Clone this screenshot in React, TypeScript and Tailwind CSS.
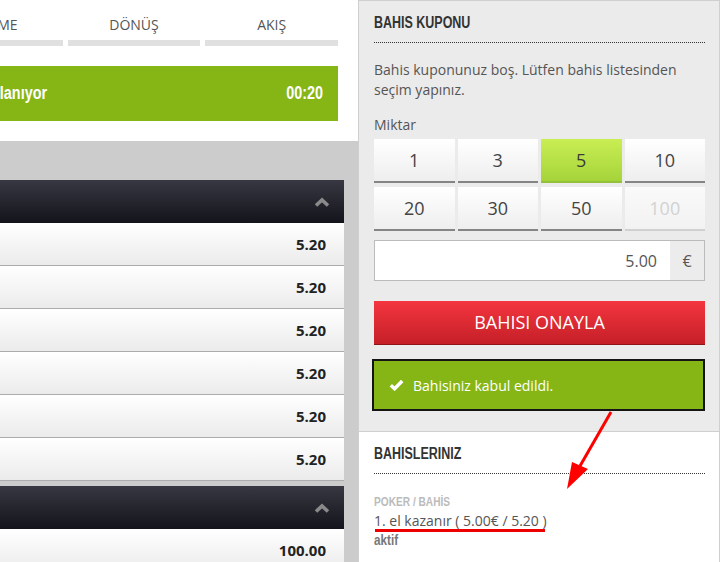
import React from "react";

function Cond({ children, right = false }: { children: React.ReactNode; right?: boolean }) {
  return (
    <span
      className={
        right
          ? "inline-block whitespace-nowrap font-['Liberation_Sans',Arial,sans-serif] font-bold scale-x-[0.8] origin-right"
          : "inline-block whitespace-nowrap font-['Liberation_Sans',Arial,sans-serif] font-bold scale-x-[0.78] origin-left"
      }
    >
      {children}
    </span>
  );
}

function Chevron() {
  return (
    <svg width="16" height="10" viewBox="0 0 16 10" className="block">
      <polyline points="2,8.5 8,3 14,8.5" fill="none" stroke="#8a8a8a" strokeWidth="3.6" strokeLinejoin="miter" />
    </svg>
  );
}

function DarkHeader() {
  return (
    <div className="h-[43px] flex items-center justify-end pr-[14px] bg-linear-to-b from-[#383842] to-[#14141c]">
      <Chevron />
    </div>
  );
}

function Row({ value }: { value: string }) {
  return (
    <div className="h-[43px] flex items-center justify-end pr-[18px] bg-linear-to-b from-[#ffffff] to-[#ebebeb] border-b border-[#acacac]">
      <span className="text-[15px] font-bold text-[#222]">{value}</span>
    </div>
  );
}

function AmountBtn({ label, kind }: { label: string; kind: "normal" | "active" | "disabled" }) {
  if (kind === "active") {
    return (
      <div className="h-[44px] flex items-center justify-center text-[18px] text-[#3a3a3a] bg-linear-to-b from-[#c9ee53] to-[#a5d43a] border-b-2 border-[#93c23a]">
        {label}
      </div>
    );
  }
  if (kind === "disabled") {
    return (
      <div className="h-[44px] flex items-center justify-center text-[18px] text-[#d2d2d2] bg-linear-to-b from-[#fafafa] to-[#f2f2f2] border-b-2 border-[#d0d0d0]">
        {label}
      </div>
    );
  }
  return (
    <div className="h-[44px] flex items-center justify-center text-[18px] text-[#444] bg-linear-to-b from-[#ffffff] to-[#eeeeee] border-b-2 border-[#858585]">
      {label}
    </div>
  );
}

export default function App() {
  return (
    <div className="relative flex w-[720px] h-[562px] overflow-hidden font-['Open_Sans',sans-serif] bg-white">
      {/* Left column */}
      <div className="w-[358px] shrink-0 flex flex-col overflow-hidden">
        <div className="bg-white pr-[20px] pb-[20px]">
          <div className="-ml-[70px]">
            <div className="grid grid-cols-3 gap-x-[5px]">
              <div className="flex flex-col">
                <div className="h-[20px] mt-[15px] leading-[20px] text-[14px] text-[#555] flex justify-end pr-[45px] whitespace-nowrap">BEKLEME</div>
                <div className="h-[6px] mt-[5px] bg-[#e0e0e0]" />
              </div>
              <div className="flex flex-col">
                <div className="h-[20px] mt-[15px] leading-[20px] text-[14px] text-[#555] text-center">DÖNÜŞ</div>
                <div className="h-[6px] mt-[5px] bg-[#e0e0e0]" />
              </div>
              <div className="flex flex-col">
                <div className="h-[20px] mt-[15px] leading-[20px] text-[14px] text-[#555] text-center">AKIŞ</div>
                <div className="h-[6px] mt-[5px] bg-[#e0e0e0]" />
              </div>
            </div>
            <div className="mt-[20px] h-[55px] bg-[#86b516] flex items-center justify-between pr-[15px] text-white text-[18px]">
              <div className="w-[117px] flex justify-end">
                <Cond right>Bahisler toplanıyor</Cond>
              </div>
              <Cond right>00:20</Cond>
            </div>
          </div>
        </div>
        <div className="flex-1 bg-[#cccccc] pt-[39px] pr-[14px]">
          <div className="-ml-[70px]">
            <DarkHeader />
            <Row value="5.20" />
            <Row value="5.20" />
            <Row value="5.20" />
            <Row value="5.20" />
            <Row value="5.20" />
            <Row value="5.20" />
            <div className="h-[5px]" />
            <DarkHeader />
            <Row value="100.00" />
          </div>
        </div>
      </div>

      {/* Right column */}
      <div className="w-[362px] shrink-0 flex flex-col border-l border-r border-t border-[#cfcfcf]">
        <div className="bg-[#ebebeb] pt-[11px] pl-[15px] pr-[14px] pb-[20px] border-b border-[#cfcfcf]">
          <h2 className="h-[20px] leading-[20px] text-[16px] text-[#333] box-content pb-[10px] border-b border-dotted border-[#333]">
            <Cond>BAHIS KUPONU</Cond>
          </h2>
          <p className="mt-[17px] text-[14px] leading-[20px] text-[#555]">
            Bahis kuponunuz boş. Lütfen bahis listesinden seçim yapınız.
          </p>
          <div className="mt-[15px] text-[14px] leading-[20px] text-[#555]">Miktar</div>
          <div className="mt-[4px] grid grid-cols-4 gap-x-[3px] gap-y-[4px]">
            <AmountBtn label="1" kind="normal" />
            <AmountBtn label="3" kind="normal" />
            <AmountBtn label="5" kind="active" />
            <AmountBtn label="10" kind="normal" />
            <AmountBtn label="20" kind="normal" />
            <AmountBtn label="30" kind="normal" />
            <AmountBtn label="50" kind="normal" />
            <AmountBtn label="100" kind="disabled" />
          </div>
          <div className="mt-[9px] h-[41px] flex border border-[#bbbbbb] bg-white">
            <div className="flex-1 flex items-center justify-end pr-[13px] text-[16px] text-[#555]">5.00</div>
            <div className="w-[34px] flex items-center justify-center bg-[#ececec] text-[16px] text-[#555]">€</div>
          </div>
          <div className="mt-[20px] h-[44px] flex items-center justify-center text-[18px] text-white bg-linear-to-b from-[#f4353f] to-[#c51f28] border-b border-[#8f141a]">
            BAHISI ONAYLA
          </div>
          <div className="mt-[14px] -ml-[2px] h-[52px] flex items-center bg-[#86b516] border-2 border-[#151515] pl-[15px]">
            <svg width="15" height="12" viewBox="0 0 15 12" className="block">
              <polyline points="1.8,6.2 5.6,9.8 13.2,2" fill="none" stroke="#fff" strokeWidth="3.4" />
            </svg>
            <span className="ml-[9px] text-[14px] text-white">Bahisiniz kabul edildi.</span>
          </div>
        </div>
        <div className="flex-1 bg-white pt-[11px] pl-[15px] pr-[14px]">
          <h2 className="h-[20px] leading-[20px] text-[16px] text-[#333] box-content pb-[10px] border-b border-dotted border-[#333]">
            <Cond>BAHISLERINIZ</Cond>
          </h2>
          <div className="mt-[18px] text-[13px] leading-[18px] text-[#bbbbbb]">
            <Cond>POKER / BAHİS</Cond>
          </div>
          <div className="text-[14px] leading-[20px] text-[#555]">
            <span className="relative inline-block">
              1. el kazanır ( 5.00€ / 5.20 )
              <span className="absolute left-[1px] right-[2px] top-[18px] h-[3px] bg-[#ee0000]" />
            </span>
          </div>
          <div className="text-[15px] leading-[17px] text-[#777]">
            <Cond>aktif</Cond>
          </div>
        </div>
      </div>

      {/* annotation arrow */}
      <svg className="absolute left-0 top-0 pointer-events-none" width="720" height="562" viewBox="0 0 720 562">
        <line x1="611" y1="412" x2="580" y2="466" stroke="#f00" strokeWidth="3" />
        <polygon points="567,489 572,462 588,469" fill="#f00" />
      </svg>
    </div>
  );
}
